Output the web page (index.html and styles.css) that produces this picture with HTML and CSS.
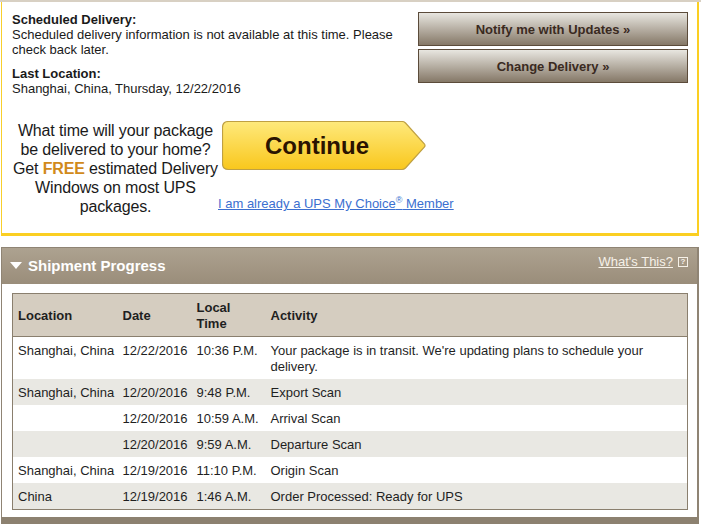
FILE: index.html
```html
<!DOCTYPE html>
<html lang="en">
<head>
    <meta charset="UTF-8">
    <title>Shipment Details</title>
    <link rel="stylesheet" href="styles.css">
</head>
<body>
    <div class="top-rule"></div>

    <div class="delivery-box">
        <div class="delivery-top">
            <div class="delivery-info">
                <div class="label">Scheduled Delivery:</div>
                <div>Scheduled delivery information is not available at this time. Please check back later.</div>
                <div class="label spaced">Last Location:</div>
                <div>Shanghai, China, Thursday, 12/22/2016</div>
            </div>
            <div class="actions">
                <button class="btn-brown">Notify me with Updates &raquo;</button>
                <button class="btn-brown">Change Delivery &raquo;</button>
            </div>
        </div>

        <div class="promo">
            <div class="promo-text">
                What time will your package be delivered to your home? Get <span class="free">FREE</span> estimated Delivery Windows on most UPS packages.
            </div>
            <div class="promo-actions">
                <button class="btn-continue">
                    <svg class="continue-shape" width="204" height="50" viewBox="0 0 204 50">
                        <defs>
                            <linearGradient id="yel" x1="0" y1="0" x2="0" y2="1">
                                <stop offset="0" stop-color="#fee97c"/>
                                <stop offset="1" stop-color="#f9c71c"/>
                            </linearGradient>
                        </defs>
                        <path d="M6.5 0.5 H180 Q182 0.5 183.5 2 L202.5 23 Q203.5 24.5 202.5 26 L183.5 47 Q182 48.5 180 48.5 H6.5 Q0.5 48.5 0.5 42.5 V6.5 Q0.5 0.5 6.5 0.5 Z"
                              fill="url(#yel)" stroke="#bfa043" stroke-width="1.2"/>
                    </svg>
                    <span class="continue-label">Continue</span>
                </button>
                <a href="#" class="choice-link">I am already a UPS My Choice<sup>&reg;</sup> Member</a>
            </div>
        </div>
    </div>

    <div class="progress">
        <div class="progress-head">
            <div class="progress-title">
                <svg width="12" height="8" viewBox="0 0 12 8"><path d="M0 0 H12 L6 7 Z" fill="#fff"/></svg>
                Shipment Progress
            </div>
            <a href="#" class="whats-this">What's This?</a>
            <span class="help-box">?</span>
        </div>

        <div class="progress-body">
            <table class="scans">
                <colgroup>
                    <col class="c-loc">
                    <col class="c-date">
                    <col class="c-time">
                    <col>
                </colgroup>
                <thead>
                    <tr>
                        <th>Location</th>
                        <th>Date</th>
                        <th>Local<br>Time</th>
                        <th>Activity</th>
                    </tr>
                </thead>
                <tbody>
                    <tr>
                        <td>Shanghai, China</td>
                        <td>12/22/2016</td>
                        <td>10:36 P.M.</td>
                        <td>Your package is in transit. We're updating plans to schedule your delivery.</td>
                    </tr>
                    <tr class="alt">
                        <td>Shanghai, China</td>
                        <td>12/20/2016</td>
                        <td>9:48 P.M.</td>
                        <td>Export Scan</td>
                    </tr>
                    <tr>
                        <td></td>
                        <td>12/20/2016</td>
                        <td>10:59 A.M.</td>
                        <td>Arrival Scan</td>
                    </tr>
                    <tr class="alt">
                        <td></td>
                        <td>12/20/2016</td>
                        <td>9:59 A.M.</td>
                        <td>Departure Scan</td>
                    </tr>
                    <tr>
                        <td>Shanghai, China</td>
                        <td>12/19/2016</td>
                        <td>11:10 P.M.</td>
                        <td>Origin Scan</td>
                    </tr>
                    <tr class="alt">
                        <td>China</td>
                        <td>12/19/2016</td>
                        <td>1:46 A.M.</td>
                        <td>Order Processed: Ready for UPS</td>
                    </tr>
                </tbody>
            </table>
        </div>
        <div class="progress-foot"></div>
    </div>
</body>
</html>
```

FILE: styles.css
```css
body {
    margin: 0;
    background: #fff;
    font-family: 'Liberation Sans', Arial, sans-serif;
    font-size: 13px;
    color: #1a1a1a;
}

.top-rule {
    height: 2px;
    background: #d8d0c3;
}

.delivery-box {
    margin: 0 2px 0 1px;
    border-left: 1px solid #f8cf2c;
    border-right: 2px solid #fbcf22;
    border-bottom: 3px solid #fbcf22;
    padding: 9px 9px 0 10px;
    height: 222px;
}

.delivery-top {
    display: flex;
    justify-content: space-between;
}

.delivery-info {
    width: 395px;
    line-height: 15px;
    padding-top: 1px;
}

.label {
    font-weight: bold;
}

.label.spaced {
    margin-top: 9px;
}

.actions {
    display: flex;
    flex-direction: column;
    gap: 3px;
    padding-top: 1px;
}

.btn-brown {
    width: 270px;
    height: 34px;
    border: 1px solid #5b4b3a;
    background: linear-gradient(#e8e6e0, #857867);
    font-family: 'Liberation Sans', Arial, sans-serif;
    font-size: 13px;
    font-weight: bold;
    color: #3a2a1f;
    cursor: pointer;
    padding: 0;
}

.promo {
    display: flex;
    margin-top: 25px;
}

.promo-text {
    width: 207px;
    margin-right: -1px;
    text-align: center;
    font-size: 16px;
    line-height: 19px;
    letter-spacing: -0.15px;
    color: #1a1a1a;
}

.free {
    color: #d18a1b;
    font-weight: bold;
}

.promo-actions {
    display: flex;
    flex-direction: column;
    align-items: flex-start;
}

.btn-continue {
    position: relative;
    width: 204px;
    height: 50px;
    margin-left: 4px;
    border: none;
    background: none;
    padding: 0;
    cursor: pointer;
}

.continue-shape {
    position: absolute;
    left: 0;
    top: 0;
}

.continue-label {
    position: relative;
    display: block;
    padding-right: 14px;
    margin-top: -1px;
    font-family: 'Liberation Sans', Arial, sans-serif;
    font-size: 24px;
    font-weight: bold;
    color: #2a1300;
}

.choice-link {
    margin-top: 25px;
    color: #3b6fd0;
    font-size: 13px;
}

.choice-link sup {
    font-size: 9px;
    line-height: 0;
}

.progress {
    margin: 11px 2px 0 1px;
    border-left: 1px solid #8f8474;
    border-right: 2px solid #8f8474;
}

.progress-head {
    display: flex;
    align-items: flex-start;
    height: 36px;
    border-top: 1px solid #8f8474;
    background: linear-gradient(#ada290, #9a8d7a);
    color: #fff;
}

.progress-title {
    display: flex;
    align-items: center;
    gap: 6px;
    padding: 9px 0 0 8px;
    font-size: 15px;
    font-weight: bold;
    flex: 1;
}

.whats-this {
    margin-top: 6px;
    color: #f6f1e8;
    font-size: 13px;
}

.help-box {
    margin: 9px 9px 0 5px;
    width: 8px;
    height: 8px;
    border: 1px solid #f6f1e8;
    font-size: 8px;
    line-height: 8px;
    text-align: center;
    font-weight: bold;
    color: #f6f1e8;
}

.progress-body {
    padding: 9px 9px 7px 10px;
}

.scans {
    width: 100%;
    table-layout: fixed;
    border-collapse: collapse;
    border: 1px solid #8a7f6e;
    font-size: 13px;
    line-height: 16px;
    color: #1f1f1f;
}

.scans th {
    background: #d5cdc0;
    text-align: left;
    font-weight: bold;
    padding: 6px 5px 4px;
    height: 32px;
    border-bottom: 1px solid #8a7f6e;
}

.scans td {
    padding: 6px 5px 4px;
    vertical-align: top;
    white-space: nowrap;
}

.scans td:last-child {
    white-space: normal;
}

.c-loc {
    width: 105px;
}

.c-date {
    width: 74px;
}

.c-time {
    width: 74px;
}

.scans tr.alt td {
    background: #e9e8e3;
}

.progress-foot {
    height: 8px;
    background: #8c8170;
    margin: 0 -2px 0 -1px;
}
```
